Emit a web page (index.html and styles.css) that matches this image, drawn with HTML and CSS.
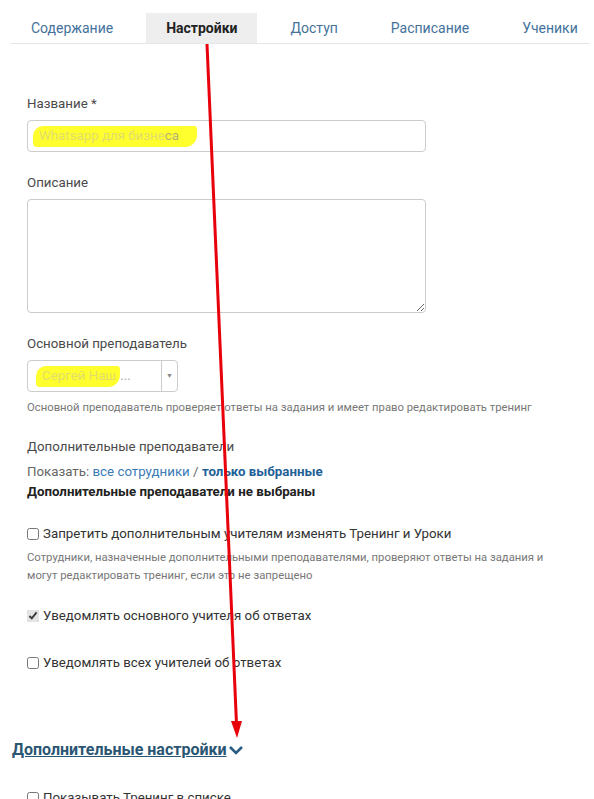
FILE: index.html
```html
<html lang="ru">
  <head>
    <meta charset="UTF-8" />
    <meta name="viewport" content="width=device-width, initial-scale=1.0" />
    <title>Настройки тренинга</title>
    <link rel="stylesheet" href="styles.css">
  </head>
  <body>
    <div class="page">
      <!-- вкладки тренинга -->
      <nav class="tabs">
        <a class="tab" href="#">Содержание</a>
        <a class="tab active" href="#">Настройки</a>
        <a class="tab" href="#">Доступ</a>
        <a class="tab" href="#">Расписание</a>
        <a class="tab" href="#">Ученики</a>
      </nav>

      <form class="settings">
        <div class="field">
          <label class="label">Название *</label>
          <div class="input"><mark class="hide wide"><span class="faint">Whatsapp для бизне</span>ca</mark></div>
        </div>

        <div class="field">
          <label class="label">Описание</label>
          <textarea class="textarea"></textarea>
        </div>

        <div class="field">
          <label class="label">Основной преподаватель</label>
          <div class="select">
            <span class="select-value"><mark class="hide"><span class="faint">Сергей Наш</span></mark>...</span>
            <span class="select-arrow">▼</span>
          </div>
          <p class="hint">Основной преподаватель проверяет ответы на задания и имеет право редактировать тренинг</p>
        </div>

        <div class="extra">
          <div class="label">Дополнительные преподаватели</div>
          <div class="show">Показать: <a href="#">все сотрудники</a> / <a class="current" href="#">только выбранные</a></div>
          <div class="empty">Дополнительные преподаватели не выбраны</div>
        </div>

        <label class="check check-forbid"><input type="checkbox"> Запретить дополнительным учителям изменять Тренинг и Уроки</label>
        <p class="hint hint-two">Сотрудники, назначенные дополнительными преподавателями, проверяют ответы на задания и могут редактировать тренинг, если это не запрещено</p>

        <label class="check check-main"><input type="checkbox" checked> Уведомлять основного учителя об ответах</label>
        <label class="check check-all"><input type="checkbox"> Уведомлять всех учителей об ответах</label>

        <a class="more" href="#"><span>Дополнительные настройки</span><svg width="16" height="10" viewBox="0 0 16 10"><path d="M2 2 L8 8 L14 2" fill="none" stroke="#2a5c82" stroke-width="2.6"/></svg></a>

        <label class="check check-next"><input type="checkbox"> Показывать Тренинг в списке</label>
      </form>

      <!-- красная стрелка поверх скриншота -->
      <svg class="arrow" width="594" height="799" viewBox="0 0 594 799">
        <line x1="207" y1="44" x2="236.5" y2="724" stroke="#e8000b" stroke-width="3"/>
        <polygon points="231,721 242,721 237,738" fill="#e8000b"/>
      </svg>
    </div>
  </body>
</html>
```

FILE: styles.css
```css
body {
  margin: 0;
  background: #fff;
  font-family: Roboto, "Liberation Sans", sans-serif;
  font-size: 13.3px;
  color: #333;
}
.page {
  position: relative;
  height: 799px;
  overflow: hidden;
}

/* вкладки */
.tabs {
  display: flex;
  gap: 13px;
  margin: 13px 4px 0 11px;
  border-bottom: 1px solid #e6e6e6;
  font-size: 14px;
}
.tab {
  padding: 0 20px;
  line-height: 30px;
  color: #44729b;
  text-decoration: none;
}
.tab.active {
  background: #eee;
  color: #222;
  font-weight: bold;
}

/* форма */
.settings {
  padding: 50px 0 0 27px;
}
.field {
  margin-bottom: 21px;
}
.label {
  display: block;
  line-height: 20px;
  margin-bottom: 6px;
  color: #4a4a4a;
}
.input,
.textarea,
.select {
  box-sizing: border-box;
  border: 1px solid #ccc;
  border-radius: 4px;
  background: #fff;
}
.input {
  width: 399px;
  height: 32px;
  padding: 6px 8px;
  line-height: 18px;
  color: #a9a9a9;
}
.textarea {
  display: block;
  width: 399px;
  height: 114px;
  resize: vertical;
  font: inherit;
}
.hide {
  background: #ffff2e;
  color: #b5b27a;
  border-radius: 10px 3px 12px 4px;
  padding: 2px 4px 4px 6px;
  margin-left: -3px;
}
.hide.wide {
  padding-right: 18px;
}
.faint {
  color: #e2dd6a;
}
.select {
  display: flex;
  width: 151px;
  height: 32px;
  line-height: 30px;
}
.select-value {
  flex: 1;
  padding-left: 11px;
  color: #a9a9a9;
}
.select-arrow {
  width: 15px;
  border-left: 1px solid #ccc;
  font-size: 7px;
  color: #888;
  text-align: center;
}
.hint {
  margin: 8px 0 0;
  font-size: 11.3px;
  line-height: 16px;
  color: #777;
}

.extra {
  margin-bottom: 22px;
}
.extra .label {
  margin-bottom: 5px;
}
.show {
  line-height: 20px;
  color: #666;
}
.show a {
  color: #3b7bb5;
  text-decoration: none;
}
.show a.current {
  color: #1f6198;
  font-weight: bold;
}
.empty {
  line-height: 20px;
  font-weight: bold;
  color: #222;
}

.check {
  display: flex;
  align-items: center;
  gap: 4px;
  line-height: 20px;
  color: #333;
}
.check input {
  margin: 0;
  width: 12px;
  height: 12px;
  accent-color: #e4e4e4;
}
.hint-two {
  margin: 5px 0 0;
  line-height: 18px;
  width: 530px;
}
.check-main {
  margin-top: 21px;
}
.check-all {
  margin-top: 27px;
}
.more {
  display: flex;
  align-items: center;
  margin: 67px 0 0 -15px;
  line-height: 20px;
  font-size: 16px;
  font-weight: bold;
  color: #2b5673;
  text-decoration: none;
}
.more span {
  text-decoration: underline;
}
.more svg {
  margin-left: 1px;
}
.check-next {
  margin-top: 28px;
}

.arrow {
  position: absolute;
  left: 0;
  top: 0;
  pointer-events: none;
}
```
